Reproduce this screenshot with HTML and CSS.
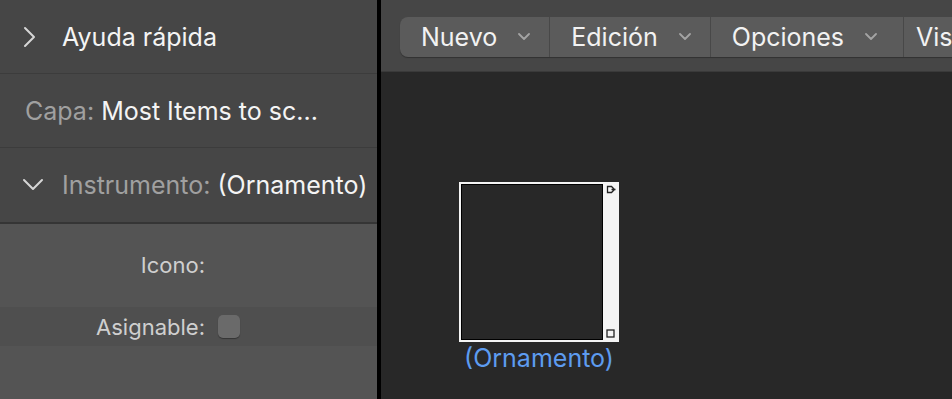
FILE: index.html
```html
<!DOCTYPE html>
<html lang="es">
<head>
  <meta charset="UTF-8" />
  <title>Instrumento - Ornamento</title>
  <link rel="stylesheet" href="styles.css">
</head>
<body>
  <div class="window">
    <aside class="inspector">
      <div class="section-row">
        <svg class="chevron" width="16" height="22" viewBox="0 0 16 22"><polyline points="3,2 12,11 3,20" /></svg>
        <span class="title">Ayuda rápida</span>
      </div>
      <div class="section-row plain">
        <span class="dim">Capa:</span>&nbsp;<span class="title">Most Items to sc...</span>
      </div>
      <div class="section-row last">
        <svg class="chevron" width="22" height="16" viewBox="0 0 22 16"><polyline points="2,3 11,12 20,3" /></svg>
        <span class="dim">Instrumento:</span>&nbsp;<span class="title">(Ornamento)</span>
      </div>
      <div class="props">
        <div class="prop">
          <span class="prop-label">Icono:</span>
        </div>
        <div class="prop alt">
          <span class="prop-label">Asignable:</span>
          <span class="checkbox"></span>
        </div>
      </div>
    </aside>

    <main class="editor">
      <div class="toolbar">
        <div class="segmented">
          <button class="seg">Nuevo <svg class="caret" width="12" height="8" viewBox="0 0 12 8"><polyline points="1,1 6,6 11,1" /></svg></button>
          <button class="seg">Edición <svg class="caret" width="12" height="8" viewBox="0 0 12 8"><polyline points="1,1 6,6 11,1" /></svg></button>
          <button class="seg">Opciones <svg class="caret" width="12" height="8" viewBox="0 0 12 8"><polyline points="1,1 6,6 11,1" /></svg></button>
          <button class="seg last">Visualización</button>
        </div>
      </div>
      <div class="canvas">
        <div class="ornament">
          <div class="ornament-box">
            <div class="ornament-body"></div>
            <div class="ornament-strip">
              <svg width="10" height="10" viewBox="0 0 10 10"><path d="M1.5 1.5 H5.5 L8.5 4.5 L5.5 7.5 H1.5 Z M5.5 4.5 H9.5" /></svg>
              <svg width="9" height="9" viewBox="0 0 9 9"><rect x="1" y="1" width="7" height="7" /></svg>
            </div>
          </div>
          <div class="ornament-name">(Ornamento)</div>
        </div>
      </div>
    </main>
  </div>
</body>
</html>
```

FILE: styles.css
```css
body {
  margin: 0;
  background: #282828;
  font-family: Inter, "Liberation Sans", sans-serif;
  overflow: hidden;
}

.window {
  display: flex;
  width: 952px;
  height: 399px;
}

.inspector {
  width: 377px;
  flex-shrink: 0;
  background: #464646;
  border-right: 4px solid #000;
  display: flex;
  flex-direction: column;
  overflow: hidden;
}

.section-row {
  height: 73px;
  flex-shrink: 0;
  display: flex;
  align-items: center;
  padding-left: 22px;
  border-bottom: 1px solid #3c3c3c;
  font-size: 25px;
  white-space: nowrap;
}

.section-row.plain {
  padding-left: 25px;
}

.section-row.last {
  border-bottom: 2px solid #353535;
  height: 74px;
}

.chevron {
  fill: none;
  stroke: #d6d6d6;
  stroke-width: 2;
  stroke-linecap: round;
  stroke-linejoin: round;
  margin-right: 24px;
}

.section-row.last .chevron {
  margin-right: 18px;
}

.title {
  color: #f4f4f4;
}

.dim {
  color: #a0a0a0;
}

.props {
  flex: 1;
  background: #545454;
  padding-top: 20px;
}

.prop {
  height: 42px;
  display: flex;
  align-items: center;
  margin-bottom: 21px;
}

.prop.alt {
  height: 39px;
  background: #4f4f4f;
}

.prop-label {
  width: 205px;
  text-align: right;
  color: #cfcfcf;
  font-size: 22px;
}

.checkbox {
  width: 22px;
  height: 23px;
  margin-left: 13px;
  border-radius: 5px;
  background: #6a6a6a;
  box-shadow: 0 1px 1px rgba(0, 0, 0, 0.35);
}

.editor {
  flex: 1;
  display: flex;
  flex-direction: column;
  overflow: hidden;
}

.toolbar {
  height: 72px;
  flex-shrink: 0;
  background: #464646;
  border-bottom: 1px solid #3a3a3a;
  box-sizing: border-box;
  padding: 17px 0 0 19px;
}

.segmented {
  display: flex;
  height: 40px;
  background: #5b5b5b;
  border-radius: 8px 0 0 8px;
  box-shadow: 0 1px 1px rgba(0, 0, 0, 0.3);
  width: 700px;
}

.seg {
  display: flex;
  align-items: center;
  background: none;
  border: none;
  border-right: 1px solid #484848;
  color: #f2f2f2;
  font-family: inherit;
  font-size: 25px;
  padding: 0 19px 0 21px;
  white-space: nowrap;
}

.seg:nth-child(3) {
  padding-right: 26px;
}

.seg.last {
  padding-left: 12px;
}

.caret {
  fill: none;
  stroke: #a4a4a4;
  stroke-width: 1.8;
  stroke-linecap: round;
  stroke-linejoin: round;
  margin-left: 21px;
}

.canvas {
  flex: 1;
  background: #282828;
  padding: 110px 0 0 78px;
}

.ornament {
  display: inline-flex;
  flex-direction: column;
  align-items: center;
}

.ornament-box {
  display: flex;
  width: 160px;
  height: 160px;
  box-sizing: border-box;
  border: 2px solid #f4f4f4;
  background: #f4f4f4;
}

.ornament-body {
  flex: 1;
  background: #282828;
  border: 1px solid #000;
}

.ornament-strip {
  width: 13px;
  display: flex;
  flex-direction: column;
  justify-content: space-between;
  align-items: center;
  padding: 1px 0 2px 1px;
}

.ornament-strip svg {
  fill: none;
  stroke: #222;
  stroke-width: 1.3;
}

.ornament-name {
  color: #5d9cf0;
  font-size: 25px;
  margin-top: 1px;
  line-height: 30px;
}
```
